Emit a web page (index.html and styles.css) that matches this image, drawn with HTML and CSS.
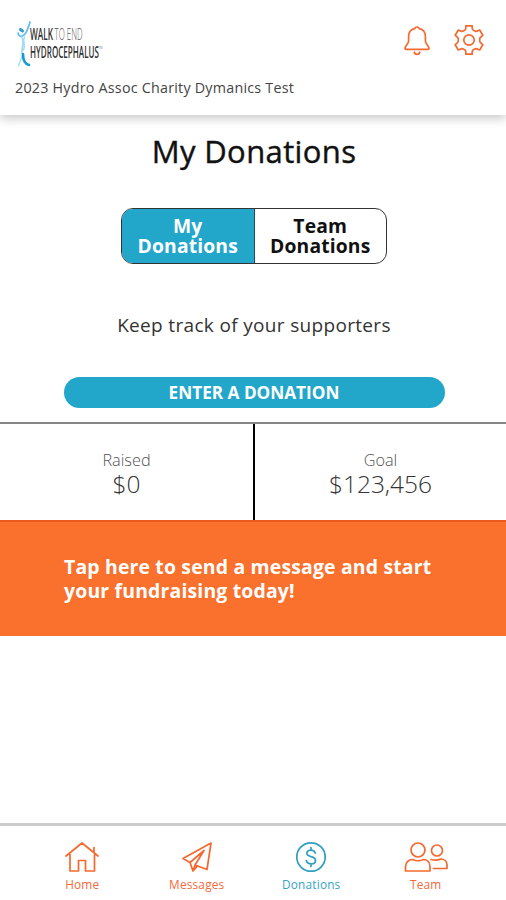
FILE: index.html
```html
<!DOCTYPE html>
<html lang="en">
<head>
<meta charset="utf-8">
<title>My Donations</title>
<link rel="stylesheet" href="styles.css">
</head>
<body>
<div class="app">
  <header class="header">
    <div class="header-top">
      <svg class="logo" width="96" height="50" viewBox="0 0 96 50" role="img" aria-label="Walk to End Hydrocephalus">
        <g fill="none" stroke-linecap="round">
          <path d="M3 13C4 17 6 17 9 15C12 13 13 8 15 2" stroke="#62c1ec" stroke-width="1.800"/>
          <path d="M5.500 9.500l2 1.500" stroke="#399bd0" stroke-width="3"/>
          <path d="M6.500 17C10 22 6 27 7 34M9.500 17C7 22 11 25 8.500 30" stroke="#a5dbf3" stroke-width="1.600"/>
          <path d="M8 34C6 38 5 42 3.500 46" stroke="#83cdef" stroke-width="1"/>
          <path d="M8 34C8 41 10 44 14 45" stroke="#179bd7" stroke-width="2.600"/>
        </g>
        <text class="logo-heavy" x="15" y="20" textLength="23" lengthAdjust="spacingAndGlyphs">WALK</text>
        <text class="logo-thin" x="39.500" y="20" textLength="28" lengthAdjust="spacingAndGlyphs">TO END</text>
        <text class="logo-heavy" x="15" y="38" textLength="69" lengthAdjust="spacingAndGlyphs">HYDROCEPHALUS</text>
        <text class="logo-mark" x="84" y="29" textLength="3.500" lengthAdjust="spacingAndGlyphs">TM</text>
      </svg>
      <div class="actions">
        <svg width="28" height="32" viewBox="0 0 28 32" class="icon">
          <path d="M11.800 4.700C12 2.400 16 2.400 16.200 4.700C20 5.500 22.400 8.500 22.400 12.500V17C22.400 20 26 22 26 24.500Q26 25.300 25 25.300H3Q2 25.300 2 24.500C2 22 5.600 20 5.600 17V12.500C5.600 8.500 8 5.500 11.800 4.700Z"/>
          <path d="M11.300 28.200C12 31 16 31 16.700 28.200"/>
        </svg>
        <svg width="32" height="32" viewBox="0 0 32 32" class="icon">
          <path d="M12.800 1.800H19.200V4.200Q19.200 6 21 6.600L22.300 7.300Q23.500 7.600 24.700 6.700L26.700 6L29.800 11.300L28 12.800Q26.400 14 26.700 16Q26.400 18 28 19.200L29.800 20.700L26.700 26L24.700 25.300Q23.500 24.400 22.300 24.700L21 25.400Q19.200 26 19.200 27.800V30.200H12.800V27.800Q12.800 26 11 25.400L9.700 24.700Q8.500 24.400 7.300 25.300L5.300 26L2.200 20.700L4 19.200Q5.600 18 5.300 16Q5.600 14 4 12.800L2.200 11.300L5.300 6L7.300 6.700Q8.500 7.600 9.700 7.300L11 6.600Q12.800 6 12.800 4.200Z"/>
          <circle cx="16" cy="16" r="5.200"/>
        </svg>
      </div>
    </div>
    <div class="event"><span>2023 Hydro Assoc Charity Dymanics Test</span></div>
  </header>

  <main class="main">
    <h1 class="title">My Donations</h1>
    <div class="tabs">
      <div class="tab tab-active">My<br>Donations</div>
      <div class="tab">Team<br>Donations</div>
    </div>
    <p class="intro">Keep track of your supporters</p>
    <button class="enter">ENTER A DONATION</button>
    <section class="stats">
      <div class="stat"><span class="stat-label">Raised</span><span class="stat-value">$0</span></div>
      <div class="stat"><span class="stat-label">Goal</span><span class="stat-value">$123,456</span></div>
    </section>
    <section class="banner"><p>Tap here to send a message and start<br>your fundraising today!</p></section>
  </main>

  <nav class="nav">
    <div class="nav-item">
      <svg width="36" height="34" viewBox="0 0 36 34" class="icon">
        <path d="M2 16L18 3L34 16M6 14.500V31H14.500V20.500H21.500V31H30.500V14.500M30 12.500V7.500"/>
      </svg>
      <span>Home</span>
    </div>
    <div class="nav-item">
      <svg width="36" height="34" viewBox="0 0 36 34" class="icon">
        <path d="M32 3L4 18.500L11 22.500L25 10.500L16 25L28 29.500L32 3ZM11 22.500L14 31L18.500 26M14 31L16 25"/>
      </svg>
      <span>Messages</span>
    </div>
    <div class="nav-item nav-current">
      <svg width="36" height="34" viewBox="0 0 36 34" class="icon">
        <circle cx="18" cy="17" r="14.200"/>
        <path d="M22.300 13C21.500 10.800 19.800 10.200 17.800 10.200C15.300 10.200 13.800 11.500 13.800 13.300C13.800 15.300 15.500 15.900 18 16.600C20.800 17.300 22.500 18.200 22.500 20.400C22.500 22.600 20.500 23.800 18.200 23.800C15.600 23.800 13.900 22.700 13.300 20.500M18 7.700V10.200M18 23.800V26.400"/>
      </svg>
      <span>Donations</span>
    </div>
    <div class="nav-item">
      <svg width="44" height="34" viewBox="0 0 44 34" class="icon">
        <circle cx="14" cy="10" r="7"/>
        <path d="M1.500 31V27C1.500 22 5 19.500 8.500 19.500Q14 22 19.500 19.500C23 19.500 26 22 26 27V31Z"/>
        <circle cx="33" cy="10.500" r="5.500"/>
        <path d="M27 19.500Q33 21 36.500 19C40.500 19 43 21.500 43 25V28.500H29.500"/>
      </svg>
      <span>Team</span>
    </div>
  </nav>
</div>
</body>
</html>
```
FILE: styles.css
```css
* { box-sizing: border-box; }
body { margin: 0; background: #fff; font-family: "Open Sans", sans-serif; color: #111; }
.app { width: 506px; height: 900px; display: flex; flex-direction: column; overflow: hidden; }
.header { height: 115px; flex: none; padding: 20px 21px 0 15px; box-shadow: 0 3px 10px rgba(0,0,0,.23); }
.header-top { display: flex; justify-content: space-between; height: 58px; }
.actions { display: flex; gap: 22px; padding-top: 4px; }
.icon { display: block; fill: none; stroke: #f4692f; stroke-width: 1.7; stroke-linecap: round; stroke-linejoin: round; }
.logo { display: block; }
.logo-heavy { font: 600 15.500px "Open Sans", sans-serif; fill: #333; }
.logo-thin { font: 300 15.500px "Open Sans", sans-serif; fill: #555; }
.logo-mark { font: 400 4px "Open Sans", sans-serif; fill: #777; }
.event { font-size: 14.3px; line-height: 20px; letter-spacing: .23px; color: #444; white-space: nowrap; }
.main { flex: 1; display: flex; flex-direction: column; align-items: center; }
.title { margin: 16px 0 0; font-size: 31px; line-height: 40px; font-weight: 400; letter-spacing: .38px; padding-left: 2px; -webkit-text-stroke: .4px #111; }
.tabs { display: flex; width: 266px; height: 56px; margin: 37px 0 0 2px; border: 1px solid #333; border-radius: 12px; overflow: hidden; }
.tab { flex: 1; display: flex; justify-content: center; text-align: center; padding-top: 7px; font-size: 19.3px; line-height: 20px; font-weight: 700; letter-spacing: .15px; }
.tab-active { background: #22a7ca; color: #fff; border-right: 1px solid #234c58; }
.intro { margin: 47px 0 0; font-size: 19px; line-height: 28px; letter-spacing: .33px; color: #333; padding-left: 2px; }
.enter { width: 381px; height: 31px; margin: 38px 0 0 2px; padding: 0; border: 0; border-radius: 16px; background: #22a7ca; color: #fff; font: 700 17.2px/31px "Open Sans", sans-serif; }
.stats { display: grid; grid-template-columns: 255px 1fr; width: 100%; height: 98px; margin-top: 14px; border-top: 2px solid #858585; }
.stat { display: flex; flex-direction: column; align-items: center; padding-top: 25px; color: #333; font-weight: 300; }
.stat:first-child { border-right: 2px solid #000; }
.stat-label { font-size: 16.3px; line-height: 22px; color: #555; }
.stat-value { font-size: 24.5px; line-height: 25px; }
.banner { width: 100%; height: 116px; background: #fa702d; border-top: 2px solid #ea5a1b; padding: 33px 64px 0; color: #fff; }
.banner p { margin: 0; font-size: 19.4px; line-height: 24px; font-weight: 700; letter-spacing: .18px; white-space: nowrap; }
.nav { flex: none; height: 77px; border-top: 3px solid #ccc; padding: 14px 23px 0 25px; display: grid; grid-template-columns: repeat(4, 1fr); }
.nav-item { display: flex; flex-direction: column; align-items: center; color: #f4693a; font-size: 11.800px; line-height: 16px; letter-spacing: .2px; }
.nav-item span { margin-top: 2px; }
.nav-current { color: #35a3c4; }
.nav-current .icon { stroke: #2e9fc1; }
```
